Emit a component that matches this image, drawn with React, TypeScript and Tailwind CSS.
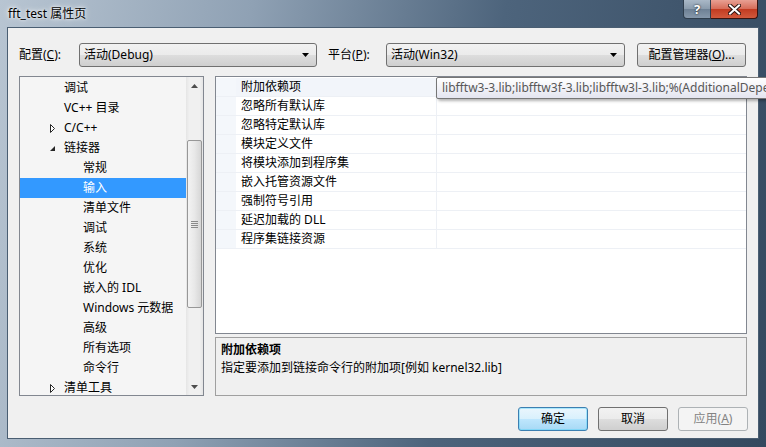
import React from "react";

const treeItems: { label: string; level: 0 | 1; expander?: "open" | "closed"; selected?: boolean }[] = [
  { label: "调试", level: 0 },
  { label: "VC++ 目录", level: 0 },
  { label: "C/C++", level: 0, expander: "closed" },
  { label: "链接器", level: 0, expander: "open" },
  { label: "常规", level: 1 },
  { label: "输入", level: 1, selected: true },
  { label: "清单文件", level: 1 },
  { label: "调试", level: 1 },
  { label: "系统", level: 1 },
  { label: "优化", level: 1 },
  { label: "嵌入的 IDL", level: 1 },
  { label: "Windows 元数据", level: 1 },
  { label: "高级", level: 1 },
  { label: "所有选项", level: 1 },
  { label: "命令行", level: 1 },
  { label: "清单工具", level: 0, expander: "closed" },
];

const props = [
  "附加依赖项",
  "忽略所有默认库",
  "忽略特定默认库",
  "模块定义文件",
  "将模块添加到程序集",
  "嵌入托管资源文件",
  "强制符号引用",
  "延迟加载的 DLL",
  "程序集链接资源",
];

function Combo({ value, width }: { value: string; width: string }) {
  return (
    <div
      className={`${width} h-[24px] flex items-center rounded-[3px] border border-[#707070] bg-[linear-gradient(#f2f2f2_0%,#ebebeb_50%,#dddddd_51%,#cfcfcf_100%)] pl-[4px] pr-[7px]`}
    >
      <span className="flex-1">{value}</span>
      <svg width="7" height="4" viewBox="0 0 7 4">
        <path d="M0 0 L7 0 L3.5 4 Z" fill="#000" />
      </svg>
    </div>
  );
}

function Button({ children, kind }: { children: React.ReactNode; kind?: "default" | "disabled" }) {
  const look =
    kind === "default"
      ? "border-[#3c7fb1] bg-[linear-gradient(#eaf6fd_0%,#d9f0fc_50%,#bee6fd_51%,#a7d9f5_100%)] shadow-[inset_0_0_0_1px_#48d2fb66]"
      : kind === "disabled"
        ? "border-[#adb2b5] bg-[#f4f4f4] text-[#838383]"
        : "border-[#707070] bg-[linear-gradient(#f2f2f2_0%,#ebebeb_50%,#dddddd_51%,#cfcfcf_100%)]";
  return (
    <div className={`w-[70px] h-[24px] flex items-center justify-center rounded-[3px] border ${look}`}>
      {children}
    </div>
  );
}

function Expander({ kind }: { kind: "open" | "closed" }) {
  return kind === "closed" ? (
    <svg width="6" height="9" viewBox="0 0 6 9" className="block">
      <path d="M0.5 0.5 L4.5 4.5 L0.5 8.5 Z" fill="#fff" stroke="#262626" />
    </svg>
  ) : (
    <svg width="7" height="7" viewBox="0 0 7 7" className="block">
      <path d="M6 1 L6 6 L1 6 Z" fill="#262626" />
    </svg>
  );
}

function ScrollBar() {
  return (
    <div className="w-[17px] flex flex-col bg-[linear-gradient(to_right,#e5e5e5,#f0f0f0_20%,#f0f0f0_80%,#e5e5e5)]">
      <div className="h-[17px] flex items-center justify-center">
        <svg width="7" height="4" viewBox="0 0 7 4">
          <path d="M0 4 L7 4 L3.5 0 Z" fill="#4d4d4d" />
        </svg>
      </div>
      <div className="h-[46px]" />
      <div className="mx-[1px] h-[168px] rounded-[2px] border border-[#979797] bg-[linear-gradient(to_right,#f3f3f3,#e8e8e8_50%,#d6d6d6)] flex flex-col items-center justify-center gap-[1px]">
        <div className="w-[7px] h-[1px] bg-[#8a8a8a]" />
        <div className="w-[7px] h-[1px] bg-[#8a8a8a]" />
        <div className="w-[7px] h-[1px] bg-[#8a8a8a]" />
        <div className="w-[7px] h-[1px] bg-[#8a8a8a]" />
      </div>
      <div className="flex-1" />
      <div className="h-[17px] flex items-center justify-center">
        <svg width="7" height="4" viewBox="0 0 7 4">
          <path d="M0 0 L7 0 L3.5 4 Z" fill="#4d4d4d" />
        </svg>
      </div>
    </div>
  );
}

export default function App() {
  return (
    <div className="relative w-[766px] h-[447px] overflow-hidden flex flex-col text-[12px] text-black font-['Noto_Sans','Noto_Sans_CJK_SC',sans-serif] bg-[linear-gradient(100deg,#b8c5d2_0%,#8fa1b4_30%,#4d647c_60%,#34495f_100%)]">
      {/* Title bar */}
      <div className="h-[27px] flex items-start">
        <div className="pl-[8px] pt-[6px] text-[12px] leading-[16px] [text-shadow:0_0_6px_#ffffff,0_0_3px_#ffffff]">
          fft_test 属性页
        </div>
        <div className="ml-auto mr-[8px] flex">
          <div className="w-[28px] h-[19px] flex items-center justify-center rounded-bl-[4px] border border-t-0 border-[#2f3e4d] bg-[linear-gradient(#a9b8c7_0%,#8a9bac_50%,#6d8094_51%,#8698ab_100%)] text-white font-bold text-[13px] leading-none [text-shadow:0_0_2px_#000]">
            ?
          </div>
          <div className="w-[47px] h-[19px] flex items-center justify-center rounded-br-[4px] border border-l-0 border-t-0 border-[#3a1410] bg-[linear-gradient(#e8a093_0%,#d66b57_50%,#c23b21_51%,#d2593c_100%)]">
            <svg width="13" height="11" viewBox="0 0 13 11">
              <path d="M2 1.5 L11 9.5 M11 1.5 L2 9.5" stroke="#2d1512" strokeWidth="4" strokeLinecap="square" />
              <path d="M2 1.5 L11 9.5 M11 1.5 L2 9.5" stroke="#ffffff" strokeWidth="2" strokeLinecap="square" />
            </svg>
          </div>
        </div>
      </div>

      {/* Client area */}
      <div className="mx-[7px] h-[412px] border border-[#4a5e72] bg-[#f0f0f0] flex flex-col">
        {/* Configuration row */}
        <div className="mt-[15px] flex items-center">
          <div className="w-[71px] pl-[11px]">
            配置(<span className="underline">C</span>):
          </div>
          <Combo value="活动(Debug)" width="w-[238px]" />
          <div className="ml-[11px] w-[58px]">
            平台(<span className="underline">P</span>):
          </div>
          <Combo value="活动(Win32)" width="w-[239px]" />
          <div className="ml-[12px]">
            <div className="w-[109px] h-[24px] flex items-center justify-center rounded-[3px] border border-[#707070] bg-[linear-gradient(#f2f2f2_0%,#ebebeb_50%,#dddddd_51%,#cfcfcf_100%)]">
              配置管理器(<span className="underline">O</span>)...
            </div>
          </div>
        </div>

        {/* Tree + grid */}
        <div className="mt-[9px] ml-[11px] flex gap-[11px]">
          <div className="w-[185px] h-[320px] border border-[#828790] bg-[#f5f5f5] flex overflow-hidden">
            <div className="flex-1 flex flex-col pt-[1px]">
              {treeItems.map((t, i) => (
                <div
                  key={i}
                  className={`h-[20px] shrink-0 flex items-center ${t.selected ? "bg-[#3399ff] text-white" : ""}`}
                >
                  <div className="w-[44px] shrink-0 flex justify-end pr-[8px]">
                    {t.expander && <Expander kind={t.expander} />}
                  </div>
                  <span className={t.level === 1 ? "pl-[19px]" : ""}>{t.label}</span>
                </div>
              ))}
            </div>
            <ScrollBar />
          </div>

          <div className="flex flex-col gap-[3px]">
            <div className="w-[532px] h-[258px] border border-[#828790] bg-white flex flex-col pt-[1px]">
              {props.map((p, i) => (
                <div key={i} className="h-[19px] flex border-b border-[#edf0f5]">
                  <div className="w-[20px] bg-[#f4f7fb]" />
                  <div className={`w-[200px] flex items-center pl-[5px] ${i === 0 ? "bg-[#f2f5fa]" : ""}`}>{p}</div>
                  <div className="flex-1 border-l border-[#edf0f5]" />
                </div>
              ))}
            </div>
            <div className="w-[532px] h-[59px] border border-[#a0a0a0] bg-[#f0f0f0] pl-[5px] pt-[3px] leading-[18px]">
              <div className="font-bold">附加依赖项</div>
              <div>指定要添加到链接命令行的附加项[例如 kernel32.lib]</div>
            </div>
          </div>
        </div>

        {/* Buttons */}
        <div className="mt-[11px] pr-[10px] flex justify-end gap-[10px]">
          <Button kind="default">确定</Button>
          <Button>取消</Button>
          <Button kind="disabled">
            应用(<span className="underline">A</span>)
          </Button>
        </div>
      </div>

      {/* Tooltip over the grid, cut off by the window edge as in the screenshot */}
      <div className="absolute left-[436px] top-[77px] h-[22px] pl-[5px] pr-[8px] flex items-center whitespace-nowrap rounded-[2px] border border-[#767676] bg-[linear-gradient(#ffffff,#e4e5f0)] text-[#575757] shadow-[2px_2px_3px_rgba(0,0,0,0.3)]">
        libfftw3-3.lib;libfftw3f-3.lib;libfftw3l-3.lib;%(AdditionalDependencies)
      </div>
    </div>
  );
}
